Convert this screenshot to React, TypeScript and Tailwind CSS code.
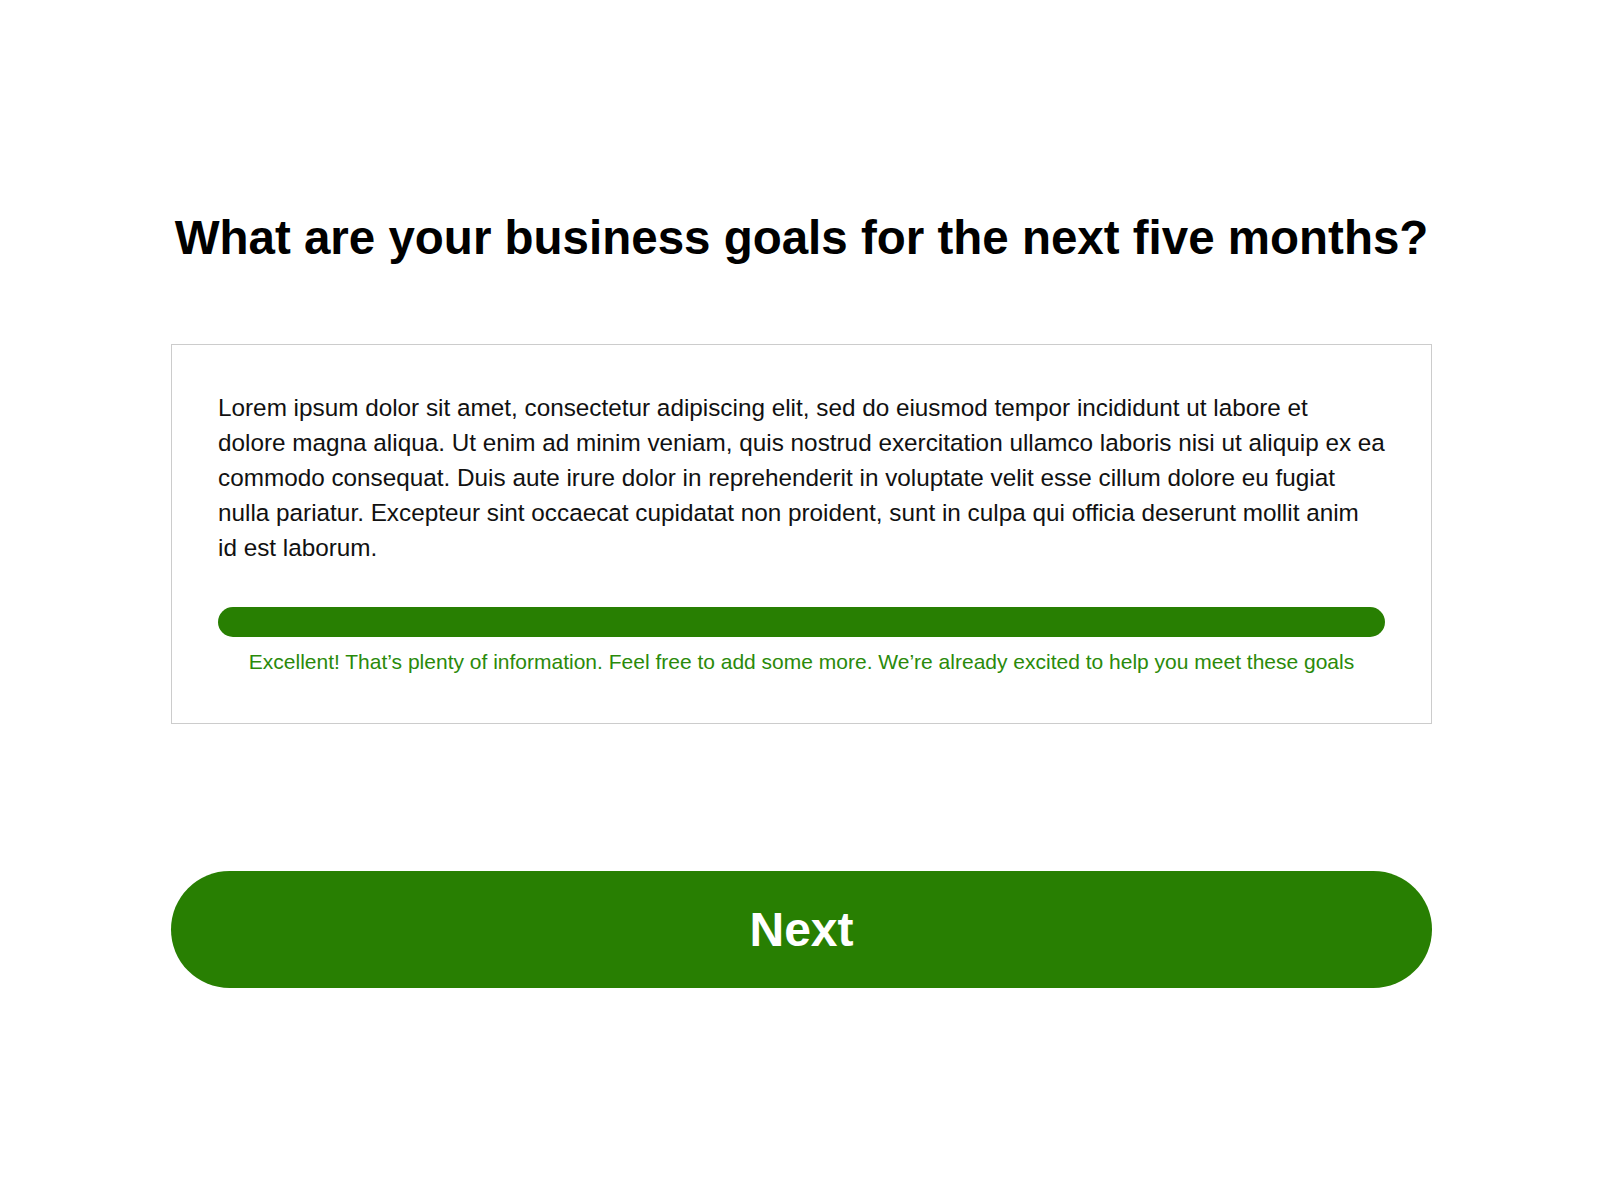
export default function App() {
  return (
    <div className="min-h-screen bg-white font-['Liberation_Sans',Arial,sans-serif]">
      <div className="ml-[171px] w-[1261px] pt-[210px]">
        <h1 className="text-center text-[47.5px] font-bold leading-[56px] text-black">
          What are your business goals for the next five months?
        </h1>

        <div className="mt-[78px] border border-[#cccccc] px-[46px] pt-[45px] pb-[47px]">
          <p className="whitespace-nowrap text-[24.3px] leading-[35px] text-[#111111]">
            Lorem ipsum dolor sit amet, consectetur adipiscing elit, sed do eiusmod tempor incididunt ut labore et
            <br />
            dolore magna aliqua. Ut enim ad minim veniam, quis nostrud exercitation ullamco laboris nisi ut aliquip ex ea
            <br />
            commodo consequat. Duis aute irure dolor in reprehenderit in voluptate velit esse cillum dolore eu fugiat
            <br />
            nulla pariatur. Excepteur sint occaecat cupidatat non proident, sunt in culpa qui officia deserunt mollit anim
            <br />
            id est laborum.
          </p>
          <div className="mt-[42px] h-[30px] w-full rounded-full bg-[#287f02]" />
          <p className="mt-[11px] whitespace-nowrap text-center text-[21px] leading-[28px] text-[#2a8a0a]">
            Excellent! That’s plenty of information. Feel free to add some more. We’re already excited to help you meet these goals
          </p>
        </div>

        <button className="mt-[147px] flex h-[117px] w-full items-center justify-center rounded-full bg-[#287f02] text-[48px] font-bold text-white">
          Next
        </button>
      </div>
    </div>
  )
}
